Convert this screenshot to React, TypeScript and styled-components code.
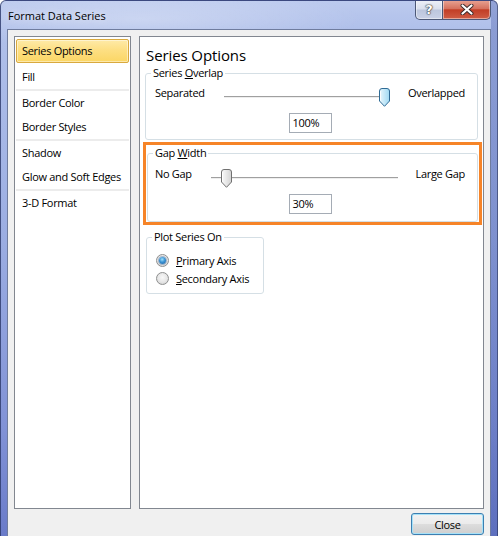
import React from 'react'
import styled, { createGlobalStyle } from 'styled-components'

const GlobalStyle = createGlobalStyle`
  html, body {
    margin: 0;
    padding: 0;
  }
  body {
    width: 498px;
    height: 536px;
    overflow: hidden;
    font-family: 'Open Sans', 'Noto Sans', sans-serif;
    font-size: 11px;
    letter-spacing: -0.3px;
    color: #000;
  }
  * {
    box-sizing: border-box;
  }
`

const Window = styled.div`
  width: 498px;
  height: 536px;
  display: flex;
  flex-direction: column;
  border: 1px solid rgba(40, 52, 96, 0.7);
  border-bottom: none;
  border-radius: 6px 6px 0 0;
  background:
    radial-gradient(ellipse 220px 30px at 140px 18px, rgba(255, 255, 255, 0.3), transparent),
    linear-gradient(90deg, transparent 0, transparent 490px, rgba(70, 90, 170, 0.35) 490px),
    linear-gradient(180deg, #bccaee 0%, #b0c0ea 28px, #9badE2 45%, #8192d6 80%, #6a7bc9 100%);
  overflow: hidden;
`

const TitleBar = styled.div`
  height: 28px;
  display: flex;
  align-items: flex-start;
  padding: 0 6px 0 7px;
`

const Title = styled.div`
  padding-top: 7px;
  line-height: 15px;
  font-size: 11px;
  letter-spacing: 0;
  color: #000;
  text-shadow: 0 0 8px rgba(255, 255, 255, 0.9);
`

const CaptionButtons = styled.div`
  margin-left: auto;
  margin-top: -1px;
  display: flex;
`

const CaptionButton = styled.div<{ $variant: 'help' | 'close' }>`
  height: 20px;
  width: ${p => (p.$variant === 'close' ? '48px' : '28px')};
  display: flex;
  align-items: center;
  justify-content: center;
  border: 1px solid #4c5877;
  border-top: none;
  border-left-width: ${p => (p.$variant === 'close' ? '0' : '1px')};
  border-radius: ${p => (p.$variant === 'close' ? '0 0 5px 0' : '0 0 0 5px')};
  background: ${p =>
    p.$variant === 'close'
      ? 'linear-gradient(180deg, #e9a595 0%, #d6725f 45%, #c23e26 52%, #cf5d45 100%)'
      : 'linear-gradient(180deg, #eef1f8 0%, #d9dfed 48%, #bcc6dd 52%, #c9d1e6 100%)'};
  box-shadow: inset 0 0 0 1px rgba(255, 255, 255, 0.45);
  color: #fff;
  font-family: 'DejaVu Sans', sans-serif;
  font-weight: bold;
  font-size: 13px;
  letter-spacing: 0;
  text-shadow: 0 0 1px #333, 0 0 1px #333, 0 0 2px #444;
`

const Client = styled.div`
  flex: 1;
  margin: 0 6px;
  padding: 6px 6px 0 6px;
  background: #f0f0f0;
  border: 1px solid #6f7c9e;
  border-bottom: none;
  display: flex;
  flex-direction: column;
`

const Panels = styled.div`
  height: 473px;
  display: flex;
  gap: 8px;
`

const NavPanel = styled.div`
  width: 117px;
  background: #fff;
  border: 1px solid #828790;
  padding: 2px 1px;
  display: flex;
  flex-direction: column;
`

const NavItem = styled.div<{ $selected?: boolean }>`
  height: 24px;
  line-height: 22px;
  padding-left: 5px;
  border: 1px solid ${p => (p.$selected ? '#d9a93e' : 'transparent')};
  border-radius: 2px;
  white-space: nowrap;
  background: ${p =>
    p.$selected ? 'linear-gradient(180deg, #feeaa8 0%, #fddf83 45%, #fbd664 100%)' : 'transparent'};
  box-shadow: ${p => (p.$selected ? 'inset 0 0 0 1px rgba(255, 255, 255, 0.45)' : 'none')};
`

const NavSeparator = styled.div<{ $hidden?: boolean }>`
  height: 2px;
  background: ${p => (p.$hidden ? 'transparent' : '#ececec')};
`

const OptionsPanel = styled.div`
  flex: 1;
  background: #fff;
  border: 1px solid #828790;
  display: flex;
  flex-direction: column;
`

const Heading = styled.div`
  margin: 8px 0 0 6px;
  font-size: 15px;
  letter-spacing: -0.1px;
  line-height: 20px;
`

const Group = styled.fieldset<{ $left: number; $right?: number; $width?: number; $top?: number }>`
  margin: ${p => p.$top ?? 0}px ${p => p.$right ?? 0}px 0 ${p => p.$left}px;
  padding: 0;
  border: 1px solid #d5dfe5;
  border-radius: 3px;
  min-width: 0;
  ${p => (p.$width ? `width: ${p.$width}px;` : '')}
`

const Legend = styled.legend`
  margin-left: 5px;
  padding: 0 2px;
  line-height: 16px;
  font-size: 11px;
`

const SliderBody = styled.div<{ $top: number; $bottom: number; $inset: number }>`
  padding: ${p => p.$top}px 12px ${p => p.$bottom}px ${p => p.$inset}px;
  display: flex;
  flex-direction: column;
  align-items: center;
`

const SliderRow = styled.div`
  align-self: stretch;
  display: flex;
  align-items: flex-start;
`

const SideLabel = styled.span`
  line-height: 16px;
  white-space: nowrap;
`

const Slider = styled.div`
  position: relative;
  flex: 1;
  height: 19px;
  margin: 3px 18px 0 19px;
`

const Track = styled.div`
  margin-top: 8px;
  height: 2px;
  border-top: 1px solid #a0a0a0;
  border-bottom: 1px solid #eeeeee;
`

const Thumb = styled.svg`
  position: absolute;
  top: 0;
  width: 11px;
  height: 19px;
`

const ValueBox = styled.div`
  margin-top: 6px;
  width: 43px;
  height: 20px;
  border: 1px solid #a5acb5;
  padding-left: 3px;
  line-height: 18px;
  background: #fff;
`

const Highlight = styled.div`
  margin: 2px 1px 0 3px;
  border: 3px solid #f68428;
  padding: 0 0 0 1px;
`

const RadioBody = styled.div`
  padding: 6px 0 6px 9px;
  display: flex;
  flex-direction: column;
`

const RadioRow = styled.div`
  height: 18px;
  display: flex;
  align-items: center;
  gap: 7px;
`

const Radio = styled.span<{ $checked?: boolean }>`
  width: 13px;
  height: 13px;
  border-radius: 50%;
  border: 1px solid #8e8f8f;
  background: radial-gradient(circle at 50% 40%, #f8f8f8 0%, #e6e6e6 55%, #c9c9c9 100%);
  display: flex;
  align-items: center;
  justify-content: center;

  &::after {
    content: '';
    width: 7px;
    height: 7px;
    border-radius: 50%;
    display: ${p => (p.$checked ? 'block' : 'none')};
    background: radial-gradient(circle at 45% 35%, #9fe0fb 0%, #3b93d4 45%, #1b5e9e 100%);
    box-shadow: 0 0 0 1px rgba(30, 80, 140, 0.35);
  }
`

const Footer = styled.div`
  display: flex;
  justify-content: flex-end;
  margin-top: 4px;
`

const Button = styled.button`
  width: 73px;
  height: 22px;
  padding: 0;
  font-family: inherit;
  font-size: 11px;
  letter-spacing: inherit;
  color: #000;
  border: 1px solid #3c7fb1;
  border-radius: 3px;
  background: linear-gradient(180deg, #f2f2f2 0%, #ebebeb 50%, #dddddd 50%, #cfcfcf 100%);
  box-shadow: inset 0 0 0 1px #a6e1f8;
`

type SliderProps = {
  left: string
  right: string
  fraction: number
  active?: boolean
}

function SliderControl({ left, right, fraction, active }: SliderProps) {
  const stroke = active ? '#2f6b95' : '#707070'
  const id = active ? 'thumbBlue' : 'thumbGray'
  return (
    <SliderRow>
      <SideLabel>{left}</SideLabel>
      <Slider>
        <Track />
        <Thumb viewBox="0 0 11 19" style={{ left: `calc((100% - 11px) * ${fraction})` }}>
          <defs>
            <linearGradient id={id} x1="0" y1="0" x2="1" y2="0">
              <stop offset="0" stopColor={active ? '#e9f7fd' : '#fbfbfb'} />
              <stop offset="1" stopColor={active ? '#9fd9f3' : '#d3d3d3'} />
            </linearGradient>
          </defs>
          <path
            d="M0.5 3 Q0.5 0.5 3 0.5 H8 Q10.5 0.5 10.5 3 V13 L5.5 18.3 L0.5 13 Z"
            fill={`url(#${id})`}
            stroke={stroke}
          />
          <path d="M1.5 3.2 V12.6" stroke="#fff" strokeOpacity="0.8" />
        </Thumb>
      </Slider>
      <SideLabel>{right}</SideLabel>
    </SliderRow>
  )
}

const navGroups = [
  ['Series Options'],
  ['Fill'],
  ['Border Color', 'Border Styles'],
  ['Shadow', 'Glow and Soft Edges'],
  ['3-D Format'],
]

export default function App() {
  return (
    <>
      <GlobalStyle />
      <Window>
        <TitleBar>
          <Title>Format Data Series</Title>
          <CaptionButtons>
            <CaptionButton $variant="help">?</CaptionButton>
            <CaptionButton $variant="close">
              <svg width="14" height="11" viewBox="0 0 14 11">
                <path d="M2.5 1.5 L11.5 9.5 M11.5 1.5 L2.5 9.5" stroke="#3a2a2a" strokeWidth="4" strokeLinecap="round" />
                <path d="M2.5 1.5 L11.5 9.5 M11.5 1.5 L2.5 9.5" stroke="#fff" strokeWidth="2.2" strokeLinecap="round" />
              </svg>
            </CaptionButton>
          </CaptionButtons>
        </TitleBar>
        <Client>
          <Panels>
            <NavPanel>
              {navGroups.map((group, gi) => (
                <React.Fragment key={gi}>
                  {gi > 0 && <NavSeparator $hidden={gi === 1} />}
                  {group.map(label => (
                    <NavItem key={label} $selected={label === 'Series Options'}>
                      {label}
                    </NavItem>
                  ))}
                </React.Fragment>
              ))}
            </NavPanel>
            <OptionsPanel>
              <Heading>Series Options</Heading>
              <Group $left={5} $right={5}>
                <Legend>
                  Series <u>O</u>verlap
                </Legend>
                <SliderBody $top={4} $bottom={6} $inset={9}>
                  <SliderControl left="Separated" right="Overlapped" fraction={1} active />
                  <ValueBox>100%</ValueBox>
                </SliderBody>
              </Group>
              <Highlight>
                <Group $left={0} $right={1}>
                  <Legend>
                    Gap <u>W</u>idth
                  </Legend>
                  <SliderBody $top={5} $bottom={7} $inset={7}>
                    <SliderControl left="No Gap" right="Large Gap" fraction={30 / 500} />
                    <ValueBox>30%</ValueBox>
                  </SliderBody>
                </Group>
              </Highlight>
              <Group $left={6} $width={118} $top={4}>
                <Legend>Plot Series On</Legend>
                <RadioBody>
                  <RadioRow>
                    <Radio $checked />
                    <span>
                      <u>P</u>rimary Axis
                    </span>
                  </RadioRow>
                  <RadioRow>
                    <Radio />
                    <span>
                      <u>S</u>econdary Axis
                    </span>
                  </RadioRow>
                </RadioBody>
              </Group>
            </OptionsPanel>
          </Panels>
          <Footer>
            <Button>Close</Button>
          </Footer>
        </Client>
      </Window>
    </>
  )
}
